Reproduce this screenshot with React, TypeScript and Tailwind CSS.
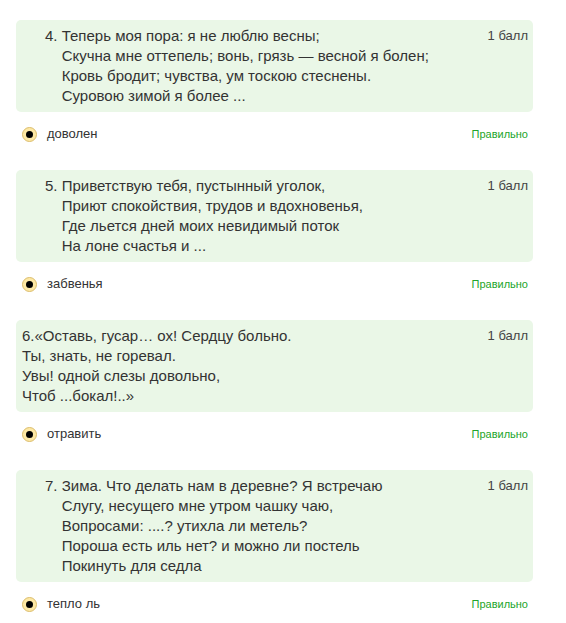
import React from "react";

type Q = { num?: string; lines: string[]; answer: string; indent: boolean };

const items: Q[] = [
  {
    num: "4.",
    indent: true,
    lines: [
      "Теперь моя пора: я не люблю весны;",
      "Скучна мне оттепель; вонь, грязь — весной я болен;",
      "Кровь бродит; чувства, ум тоскою стеснены.",
      "Суровою зимой я более ...",
    ],
    answer: "доволен",
  },
  {
    num: "5.",
    indent: true,
    lines: [
      "Приветствую тебя, пустынный уголок,",
      "Приют спокойствия, трудов и вдохновенья,",
      "Где льется дней моих невидимый поток",
      "На лоне счастья и ...",
    ],
    answer: "забвенья",
  },
  {
    indent: false,
    lines: [
      "6.«Оставь, гусар… ох! Сердцу больно.",
      "Ты, знать, не горевал.",
      "Увы! одной слезы довольно,",
      "Чтоб ...бокал!..»",
    ],
    answer: "отравить",
  },
  {
    num: "7.",
    indent: true,
    lines: [
      "Зима. Что делать нам в деревне? Я встречаю",
      "Слугу, несущего мне утром чашку чаю,",
      "Вопросами: ....? утихла ли метель?",
      "Пороша есть иль нет? и можно ли постель",
      "Покинуть для седла",
    ],
    answer: "тепло ль",
  },
];

export default function App() {
  return (
    <div
      className="w-[566px] h-[623px] bg-white pt-[20px] pl-[16px] overflow-hidden"
      style={{ fontFamily: '"Liberation Sans", Arial, sans-serif' }}
    >
      <div className="w-[517px]">
        {items.map((q, i) => (
          <div key={i} className="mb-[26px]">
            <div className="bg-[#eaf7e7] rounded-[5px] py-[6px] pl-[6px] pr-[5px] flex items-start">
              <div className={`flex-1 text-[15px] leading-[20px] text-[#333333] ${q.indent ? "pl-[23px]" : ""}`}>
                {q.num ? (
                  <div className="flex">
                    <span className="shrink-0 whitespace-pre">{q.num + " "}</span>
                    <div>
                      {q.lines.map((l, j) => (
                        <div key={j} className="whitespace-nowrap">{l}</div>
                      ))}
                    </div>
                  </div>
                ) : (
                  q.lines.map((l, j) => (
                    <div key={j} className="whitespace-nowrap">{l}</div>
                  ))
                )}
              </div>
              <div className="text-[13px] leading-[20px] text-[#444444] whitespace-nowrap">1 балл</div>
            </div>
            <div className="mt-[12px] h-[20px] flex items-center pr-[5px]">
              <div className="ml-[6px] w-[15px] h-[15px] rounded-full bg-[#fde8a4] border border-[#dcbd6c] flex items-center justify-center">
                <div className="w-[7px] h-[7px] rounded-full bg-black" />
              </div>
              <span className="ml-[10px] text-[13px] text-[#333333]">{q.answer}</span>
              <span className="ml-auto text-[11px] text-[#22a52a]">Правильно</span>
            </div>
          </div>
        ))}
      </div>
    </div>
  );
}
